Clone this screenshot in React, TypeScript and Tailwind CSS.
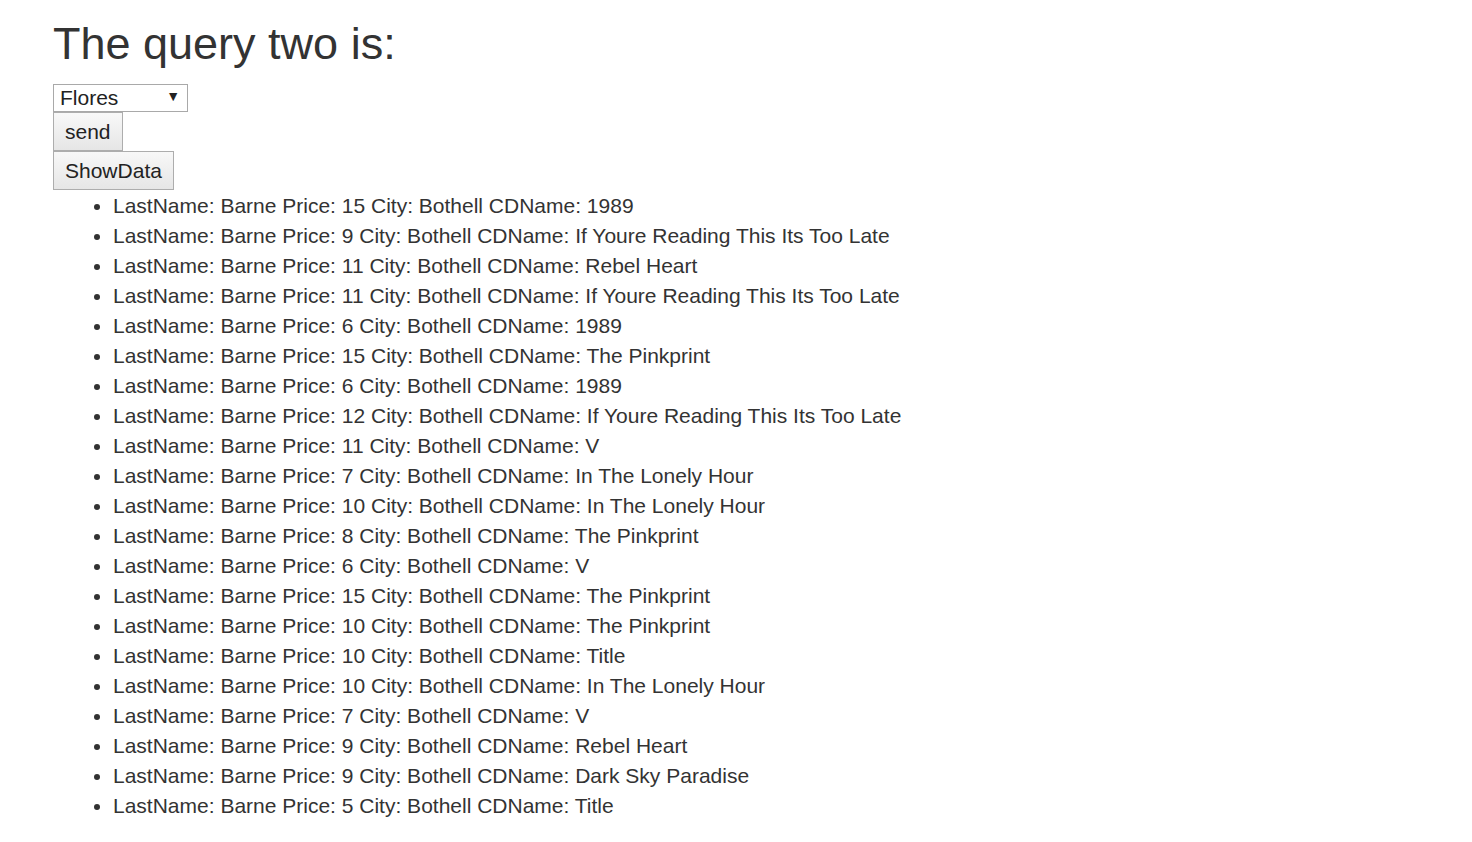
import { useState } from "react";

const rows: [number, string][] = [
  [15, "1989"],
  [9, "If Youre Reading This Its Too Late"],
  [11, "Rebel Heart"],
  [11, "If Youre Reading This Its Too Late"],
  [6, "1989"],
  [15, "The Pinkprint"],
  [6, "1989"],
  [12, "If Youre Reading This Its Too Late"],
  [11, "V"],
  [7, "In The Lonely Hour"],
  [10, "In The Lonely Hour"],
  [8, "The Pinkprint"],
  [6, "V"],
  [15, "The Pinkprint"],
  [10, "The Pinkprint"],
  [10, "Title"],
  [10, "In The Lonely Hour"],
  [7, "V"],
  [9, "Rebel Heart"],
  [9, "Dark Sky Paradise"],
  [5, "Title"],
];

export default function App() {
  const [naam, setNaam] = useState("Flores");

  return (
    <div className="min-h-screen bg-white pl-[53px] text-[#333] font-['Liberation_Sans',Arial,sans-serif] text-[21px] leading-[30px]">
      <h2 className="pt-[19px] pb-[14px] text-[45px] leading-[50px] font-normal">
        The query two is:
      </h2>
      <div className="relative w-[135px] h-[28px]">
        <select
          value={naam}
          onChange={(e) => setNaam(e.target.value)}
          className="appearance-none w-full h-full border border-[#a9a9a9] bg-white pl-[6px] text-[21px] leading-[26px] text-[#222]"
        >
          <option>Flores</option>
          <option>Barne</option>
        </select>
        <span className="pointer-events-none absolute right-[8px] top-[4px] text-[14px] leading-[18px] text-[#222]">
          ▼
        </span>
      </div>
      <div className="flex flex-col items-start mt-[1px]">
        <button className="h-[39px] px-[11px] border border-[#adadad] bg-gradient-to-b from-[#f8f8f8] to-[#e6e6e6] text-[21px] leading-[30px] text-[#222]">
          send
        </button>
        <button className="h-[39px] px-[11px] border border-[#adadad] bg-gradient-to-b from-[#f8f8f8] to-[#e6e6e6] text-[21px] leading-[30px] text-[#222]">
          ShowData
        </button>
      </div>
      <ul className="list-disc pl-[60px] mt-[1px]">
        {rows.map(([prijs, cd], i) => (
          <li key={i}>
            LastName: Barne Price: {prijs} City: Bothell CDName: {cd}
          </li>
        ))}
      </ul>
    </div>
  );
}
